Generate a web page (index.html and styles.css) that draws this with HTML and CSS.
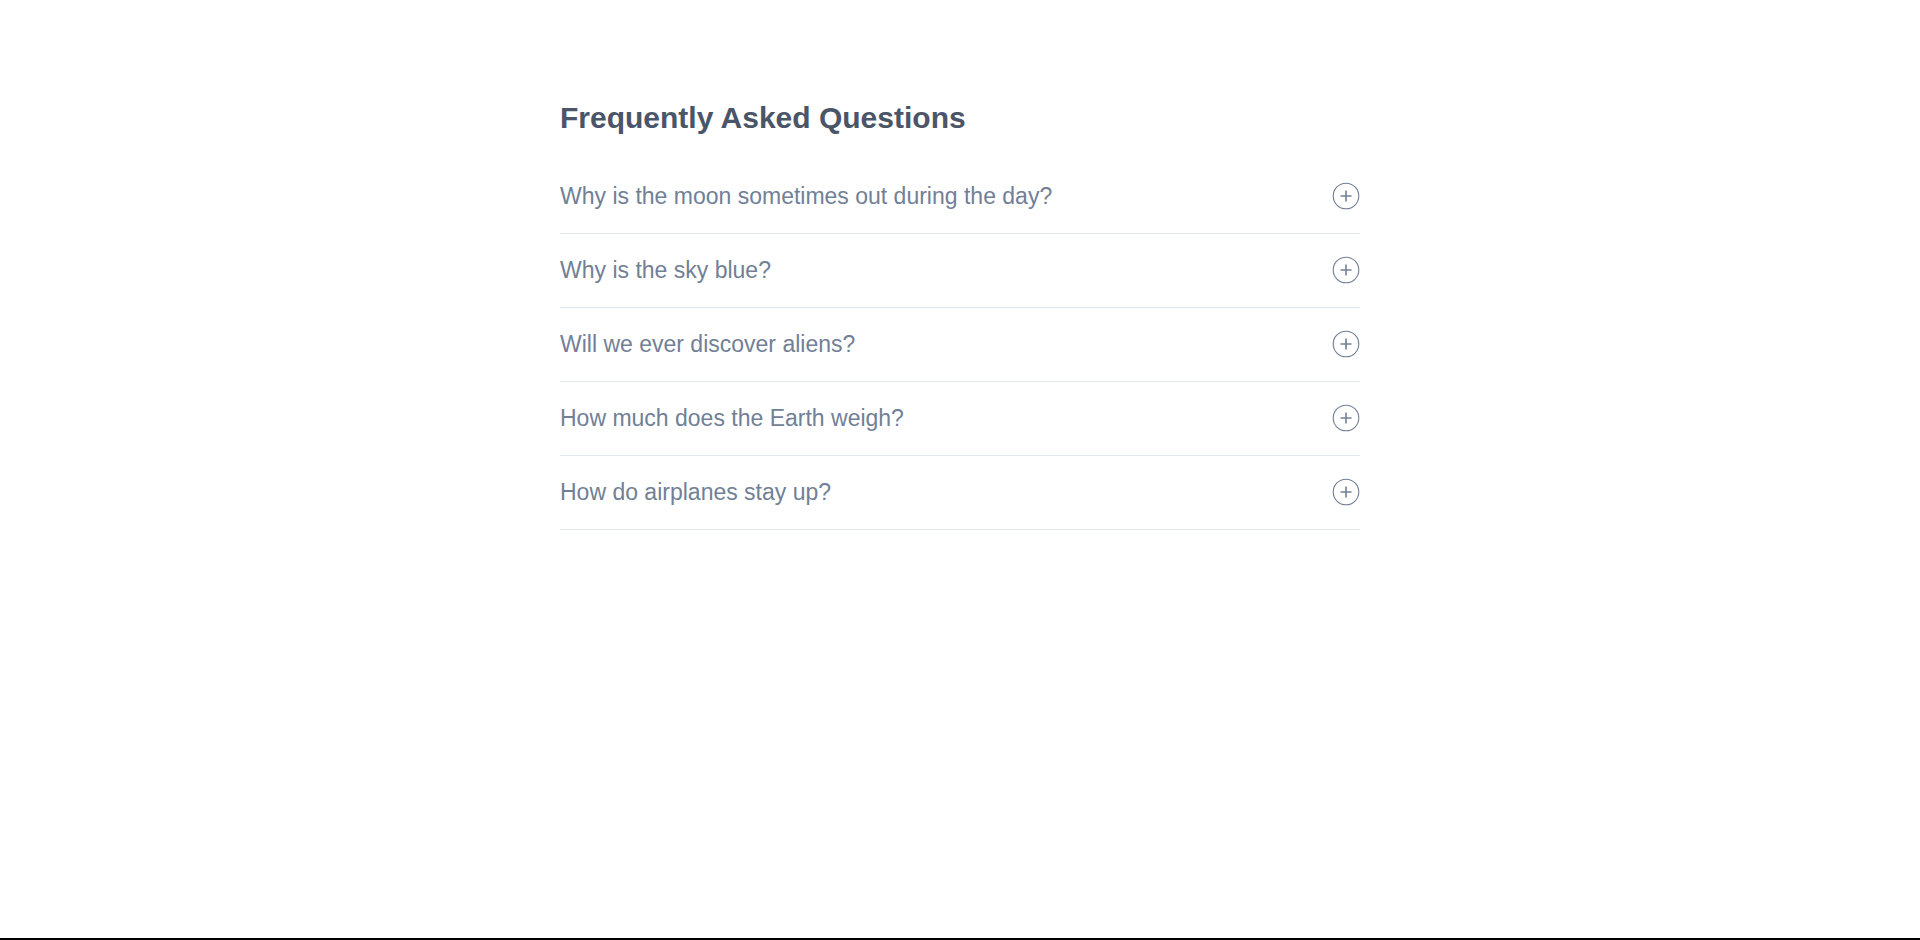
FILE: index.html
```
<!DOCTYPE html>
<html lang="en">
<head>
<meta charset="utf-8">
<title>FAQ</title>
<link rel="stylesheet" href="styles.css">
</head>
<body>
<div class="page">
  <section class="faq">
    <h2 class="faq-title">Frequently Asked Questions</h2>
    <ul class="faq-list">
      <li class="faq-item"><span class="faq-q">Why is the moon sometimes out during the day?</span><svg class="faq-icon" viewBox="0 0 28 28"><circle cx="14" cy="14" r="12.8"/><path d="M14 8.5v11M8.5 14h11"/></svg></li>
      <li class="faq-item"><span class="faq-q">Why is the sky blue?</span><svg class="faq-icon" viewBox="0 0 28 28"><circle cx="14" cy="14" r="12.8"/><path d="M14 8.5v11M8.5 14h11"/></svg></li>
      <li class="faq-item"><span class="faq-q">Will we ever discover aliens?</span><svg class="faq-icon" viewBox="0 0 28 28"><circle cx="14" cy="14" r="12.8"/><path d="M14 8.5v11M8.5 14h11"/></svg></li>
      <li class="faq-item"><span class="faq-q">How much does the Earth weigh?</span><svg class="faq-icon" viewBox="0 0 28 28"><circle cx="14" cy="14" r="12.8"/><path d="M14 8.5v11M8.5 14h11"/></svg></li>
      <li class="faq-item"><span class="faq-q">How do airplanes stay up?</span><svg class="faq-icon" viewBox="0 0 28 28"><circle cx="14" cy="14" r="12.8"/><path d="M14 8.5v11M8.5 14h11"/></svg></li>
    </ul>
  </section>
</div>
</body>
</html>
```
FILE: styles.css
```
html, body {
  margin: 0;
  padding: 0;
  background: #fff;
}
body {
  font-family: "Liberation Sans", Arial, sans-serif;
}
.page {
  box-sizing: border-box;
  min-height: 100vh;
  border-bottom: 2px solid #000;
  padding-top: 100px;
}
.faq {
  width: 800px;
  margin: 0 auto;
}
.faq-title {
  margin: 0 0 24px;
  font-size: 30px;
  line-height: 36px;
  font-weight: 700;
  color: #4a5568;
}
.faq-list {
  list-style: none;
  margin: 0;
  padding: 0;
}
.faq-item {
  display: flex;
  align-items: center;
  justify-content: space-between;
  padding: 22px 0 23px;
  border-bottom: 1px solid #e2e8f0;
}
.faq-q {
  font-size: 23px;
  line-height: 28px;
  color: #718096;
}
.faq-icon {
  width: 28px;
  height: 28px;
  fill: none;
  stroke: #718096;
  stroke-width: 1.1;
}
.faq-icon path {
  stroke-width: 1.6;
}
```
